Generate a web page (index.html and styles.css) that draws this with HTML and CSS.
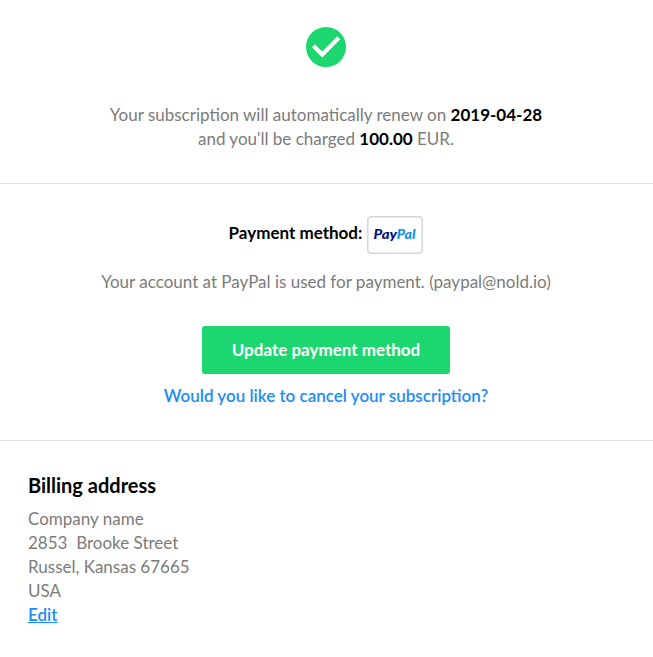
FILE: index.html
```html
<!DOCTYPE html>
<html lang="en">
<head>
<meta charset="utf-8">
<title>Subscription</title>
<link rel="stylesheet" href="styles.css">
</head>
<body>
<section class="status">
<svg class="check" viewBox="0 0 40 40" width="40" height="40"><circle cx="20" cy="20" r="20" fill="#1cd76f"/><path d="M5.9 20.2 8.9 17.2l7.3 7.3L31.2 9.3l3.1 3L16.2 30.4Z" fill="#fff"/></svg>
<p>Your subscription will automatically renew on <b>2019-04-28</b><br>and you'll be charged <b>100.00</b> EUR.</p>
</section>
<section class="payment">
<div class="method"><span class="label">Payment method:</span>
<svg class="paypal" width="56" height="38" viewBox="0 0 56 38"><rect x=".75" y=".75" width="54.5" height="36.5" rx="3.5" fill="#fff" stroke="#d6d6d6" stroke-width="1.5"/><text x="6.5" y="23.4" textLength="23.5" lengthAdjust="spacingAndGlyphs" fill="#000f8a">Pay</text><text x="29.7" y="23.4" textLength="18.8" lengthAdjust="spacingAndGlyphs" fill="#0a91e8">Pal</text></svg></div>
<p class="account">Your account at PayPal is used for payment. (paypal@nold.io)</p>
<button class="update">Update payment method</button>
<a class="cancel">Would you like to cancel your subscription?</a>
</section>
<section class="billing">
<h2>Billing address</h2>
<address>Company name<br>2853&nbsp; Brooke Street<br>Russel, Kansas 67665<br>USA</address>
<a class="edit">Edit</a>
</section>
</body>
</html>
```
FILE: styles.css
```css
* { box-sizing: border-box; }
body { margin: 0; background: #fff; color: #7b7b7b; font: 17px/24px Lato, sans-serif; }
p, h2 { margin: 0; }
b { color: #000; font-weight: 700; }
section { display: flex; flex-direction: column; align-items: center; text-align: center; }
.status { height: 184px; padding: 27px 1px 0 0; border-bottom: 1px solid #ddd; }
.check { margin-bottom: 36px; }
.payment { height: 257px; padding: 32px 1px 0 0; border-bottom: 1px solid #ddd; }
.method { display: flex; gap: 5px; color: #000; font-weight: 700; }
.label { padding-top: 5px; }
.paypal { font: italic 900 12.5px Lato, sans-serif; }
.account { margin-top: 16px; }
.update { width: 248px; height: 48px; margin-top: 32px; border: 0; border-radius: 3px; background: #1cd76f; color: #fff; font: 700 17px/24px Lato, sans-serif; }
.cancel { margin-top: 10px; color: #1c8df5; font-weight: 600; }
.billing { align-items: flex-start; text-align: left; padding: 32px 28px; }
h2 { color: #000; font-size: 20px; line-height: 24px; margin-bottom: 10px; }
address { font-style: normal; }
.edit { color: #1c8df5; font-weight: 600; text-decoration: underline; }
```
